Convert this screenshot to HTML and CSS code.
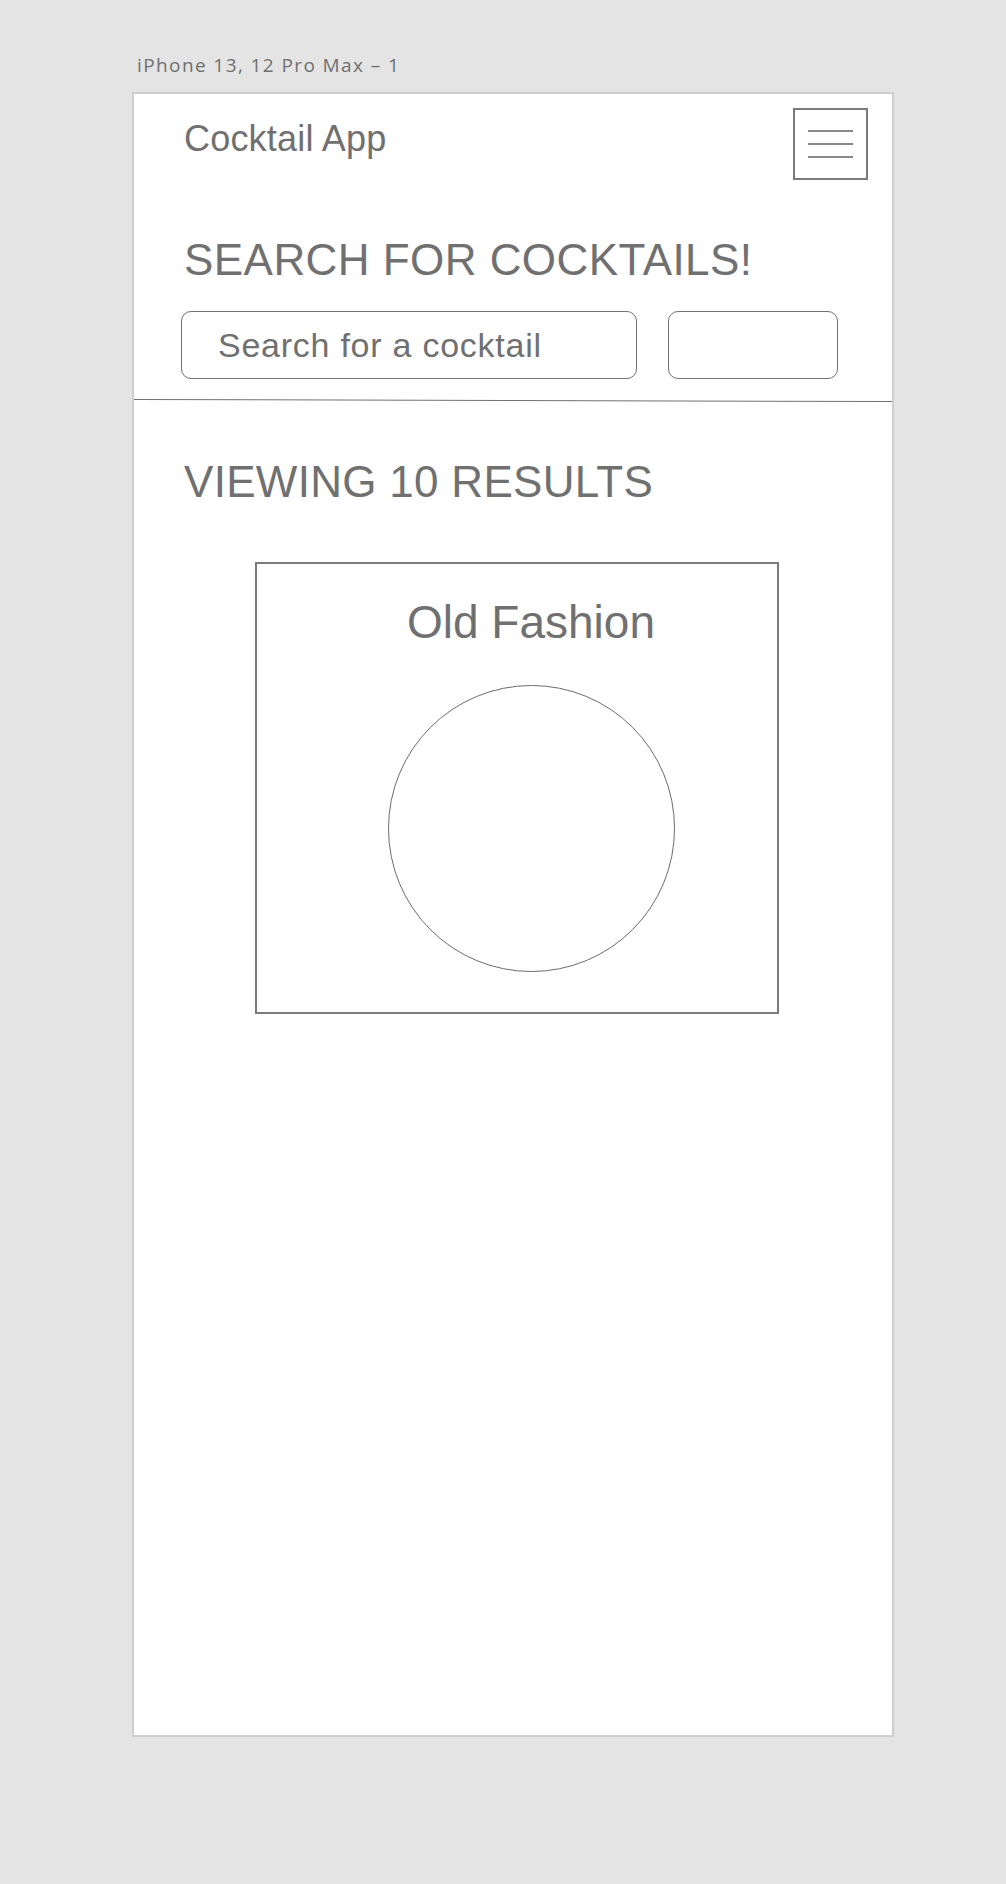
FILE: index.html
```html
<!DOCTYPE html>
<html lang="en">
<head>
    <meta charset="UTF-8">
    <meta name="viewport" content="width=device-width, initial-scale=1.0">
    <title>Cocktail App</title>
    <link rel="stylesheet" href="styles.css">
</head>
<body>
    <div class="page">
        <div class="artboard-label">iPhone 13, 12 Pro Max – 1</div>
        <div class="artboard">
            <div class="header">
                <div class="app-title">Cocktail App</div>
                <button class="menu-btn" aria-label="Menu">
                    <span></span>
                    <span></span>
                    <span></span>
                </button>
            </div>

            <h1 class="section-title search-title">SEARCH FOR COCKTAILS!</h1>
            <div class="search-row">
                <input type="text" id="searchInput" class="search-input" placeholder="Search for a cocktail">
                <button class="search-btn" aria-label="Search"></button>
            </div>

            <hr class="divider">

            <h2 class="section-title results-title">VIEWING 10 RESULTS</h2>
            <div class="card">
                <div class="card-title">Old Fashion</div>
                <div class="card-image"></div>
            </div>
        </div>
    </div>
</body>
</html>
```

FILE: styles.css
```css
body {
    margin: 0;
    padding: 0;
    background-color: #e4e4e4;
    font-family: "Liberation Sans", Arial, sans-serif;
    color: #707070;
}
.page {
    width: 762px;
    margin-left: 132px;
    padding-top: 52px;
    padding-bottom: 147px;
}
.artboard-label {
    font-family: "Open Sans", sans-serif;
    font-size: 19px;
    line-height: 26px;
    letter-spacing: 1.4px;
    margin-left: 5px;
    margin-bottom: 14px;
}
.artboard {
    height: 1645px;
    box-sizing: border-box;
    background-color: #fff;
    border: 2px solid #cfcfcf;
}
.header {
    display: flex;
    justify-content: space-between;
    align-items: flex-start;
    padding: 14px 24px 0 50px;
}
.app-title {
    margin-top: 11px;
    font-size: 36px;
    line-height: 40px;
    letter-spacing: 0.2px;
}
.menu-btn {
    width: 75px;
    height: 72px;
    padding: 0;
    display: flex;
    flex-direction: column;
    align-items: center;
    justify-content: center;
    gap: 11px;
    background: #fff;
    border: 2px solid #7a7a7a;
    cursor: pointer;
}
.menu-btn span {
    display: block;
    width: 45px;
    height: 2px;
    background-color: #888;
}
.section-title {
    margin: 0;
    padding-left: 50px;
    font-size: 44px;
    font-weight: normal;
    line-height: 50px;
}
.search-title {
    margin-top: 55px;
    letter-spacing: 0.45px;
}
.search-row {
    display: flex;
    gap: 31px;
    margin: 26px 0 0 47px;
}
.search-input {
    width: 456px;
    height: 68px;
    box-sizing: border-box;
    padding: 0 0 0 36px;
    border: 1.5px solid #707070;
    border-radius: 10px;
    font-family: "Liberation Sans", Arial, sans-serif;
    font-size: 34px;
    letter-spacing: 0.75px;
    color: #707070;
    outline: none;
}
.search-input::placeholder {
    color: #707070;
}
.search-btn {
    width: 170px;
    height: 68px;
    background: #fff;
    border: 1.5px solid #707070;
    border-radius: 10px;
    cursor: pointer;
}
.divider {
    margin: 21px 0 0;
    border: none;
    border-top: 1.5px solid #707070;
    transform: rotate(0.15deg);
}
.results-title {
    margin-top: 56px;
    letter-spacing: 0.3px;
}
.card {
    width: 524px;
    margin: 55px 0 0 121px;
    padding: 33px 0 40px 28px;
    box-sizing: border-box;
    display: flex;
    flex-direction: column;
    align-items: center;
    border: 2px solid #7a7a7a;
}
.card-title {
    font-size: 46px;
    line-height: 50px;
}
.card-image {
    width: 287px;
    height: 287px;
    margin-top: 38px;
    box-sizing: border-box;
    border: 1.5px solid #6c6c6c;
    border-radius: 50%;
}
```
